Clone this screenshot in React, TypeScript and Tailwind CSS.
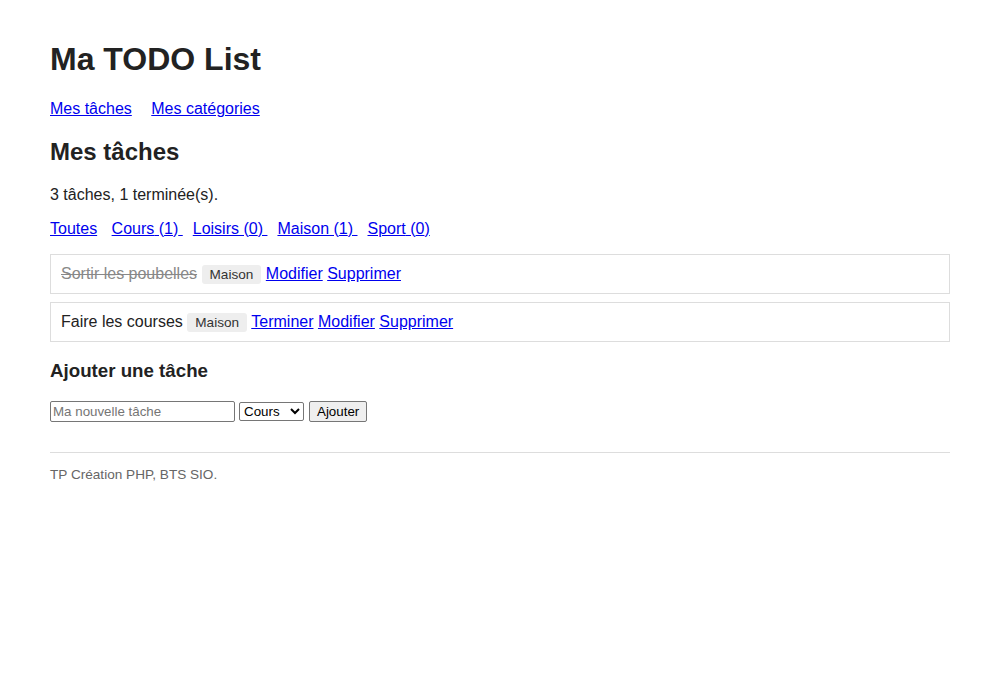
import React from 'react';

type Task = {
  id: number;
  title: string;
  category: string;
  done: boolean;
};

const tasks: Task[] = [
  { id: 1, title: 'Sortir les poubelles', category: 'Maison', done: true },
  { id: 2, title: 'Faire les courses', category: 'Maison', done: false },
];

const categories = [
  { name: 'Cours', count: 1 },
  { name: 'Loisirs', count: 0 },
  { name: 'Maison', count: 1 },
  { name: 'Sport', count: 0 },
];

const link = 'text-[#0000ee] underline';

export default function App() {
  return (
    <div className="min-h-[700px] bg-white font-['Liberation_Sans',Arial,sans-serif] text-[16px] leading-[normal] text-[#222]">
      <div className="mx-auto max-w-[900px] pt-[20px]">
        <h1 className="mt-[21.44px] text-[32px] font-bold">Ma TODO List</h1>

        {/* Navigation principale */}
        <nav className="mt-[21.44px]">
          <a href="#" className={`${link} mr-[15px]`}>Mes tâches</a>{' '}
          <a href="#" className={link}>Mes catégories</a>
        </nav>

        <h2 className="mt-[19.92px] text-[24px] font-bold">Mes tâches</h2>

        <p className="mt-[19.92px]">3 tâches, 1 terminée(s).</p>

        {/* Filtres par catégorie */}
        <p className="mt-[16px]">
          <a href="#" className={`${link} mr-[10px]`}>Toutes</a>{' '}
          {categories.map((c) => (
            <React.Fragment key={c.name}>
              <a href="#" className={`${link} mr-[10px]`}>
                {c.name} ({c.count}){' '}
              </a>
            </React.Fragment>
          ))}
        </p>

        <ul className="mt-[16px]">
          {tasks.map((t) => (
            <li key={t.id} className="mb-[8px] border border-[#ddd] p-[10px]">
              {t.done ? (
                <span className="text-[#888] line-through">{t.title}</span>
              ) : (
                <span>{t.title}</span>
              )}{' '}
              <span className="rounded-[3px] bg-[#eee] px-[8px] py-[2px] text-[13.6px] text-[#333]">
                {t.category}
              </span>{' '}
              {!t.done && (
                <>
                  <a href="#" className={link}>Terminer</a>{' '}
                </>
              )}
              <a href="#" className={link}>Modifier</a>{' '}
              <a href="#" className={link}>Supprimer</a>
            </li>
          ))}
        </ul>

        <h3 className="mt-[18.72px] text-[18.72px] font-bold">Ajouter une tâche</h3>

        {/* Formulaire d'ajout */}
        <form className="mt-[18.72px] flex items-center gap-[4px] font-['Liberation_Sans',Arial,sans-serif] text-[13.33px]">
          <input
            type="text"
            placeholder="Ma nouvelle tâche"
            className="h-[21px] w-[185px] rounded-[2px] border border-[#767676] bg-white px-[2px] text-[13.33px] text-black placeholder:text-[#757575]"
          />
          <select
            defaultValue="Cours"
            className="h-[19px] w-[65px] rounded-[2px] border border-[#767676] bg-white text-[13.33px] text-black"
          >
            {categories.map((c) => (
              <option key={c.name}>{c.name}</option>
            ))}
          </select>
          <button
            type="button"
            className="ml-[1px] h-[21px] rounded-[2px] border border-[#767676] bg-[#efefef] px-[7px] text-[13.33px] text-black"
          >
            Ajouter
          </button>
        </form>

        <footer className="mt-[30px] border-t border-[#ddd] pt-[14px] text-[13.6px] text-[#666]">
          TP Création PHP, BTS SIO.
        </footer>
      </div>
    </div>
  );
}
